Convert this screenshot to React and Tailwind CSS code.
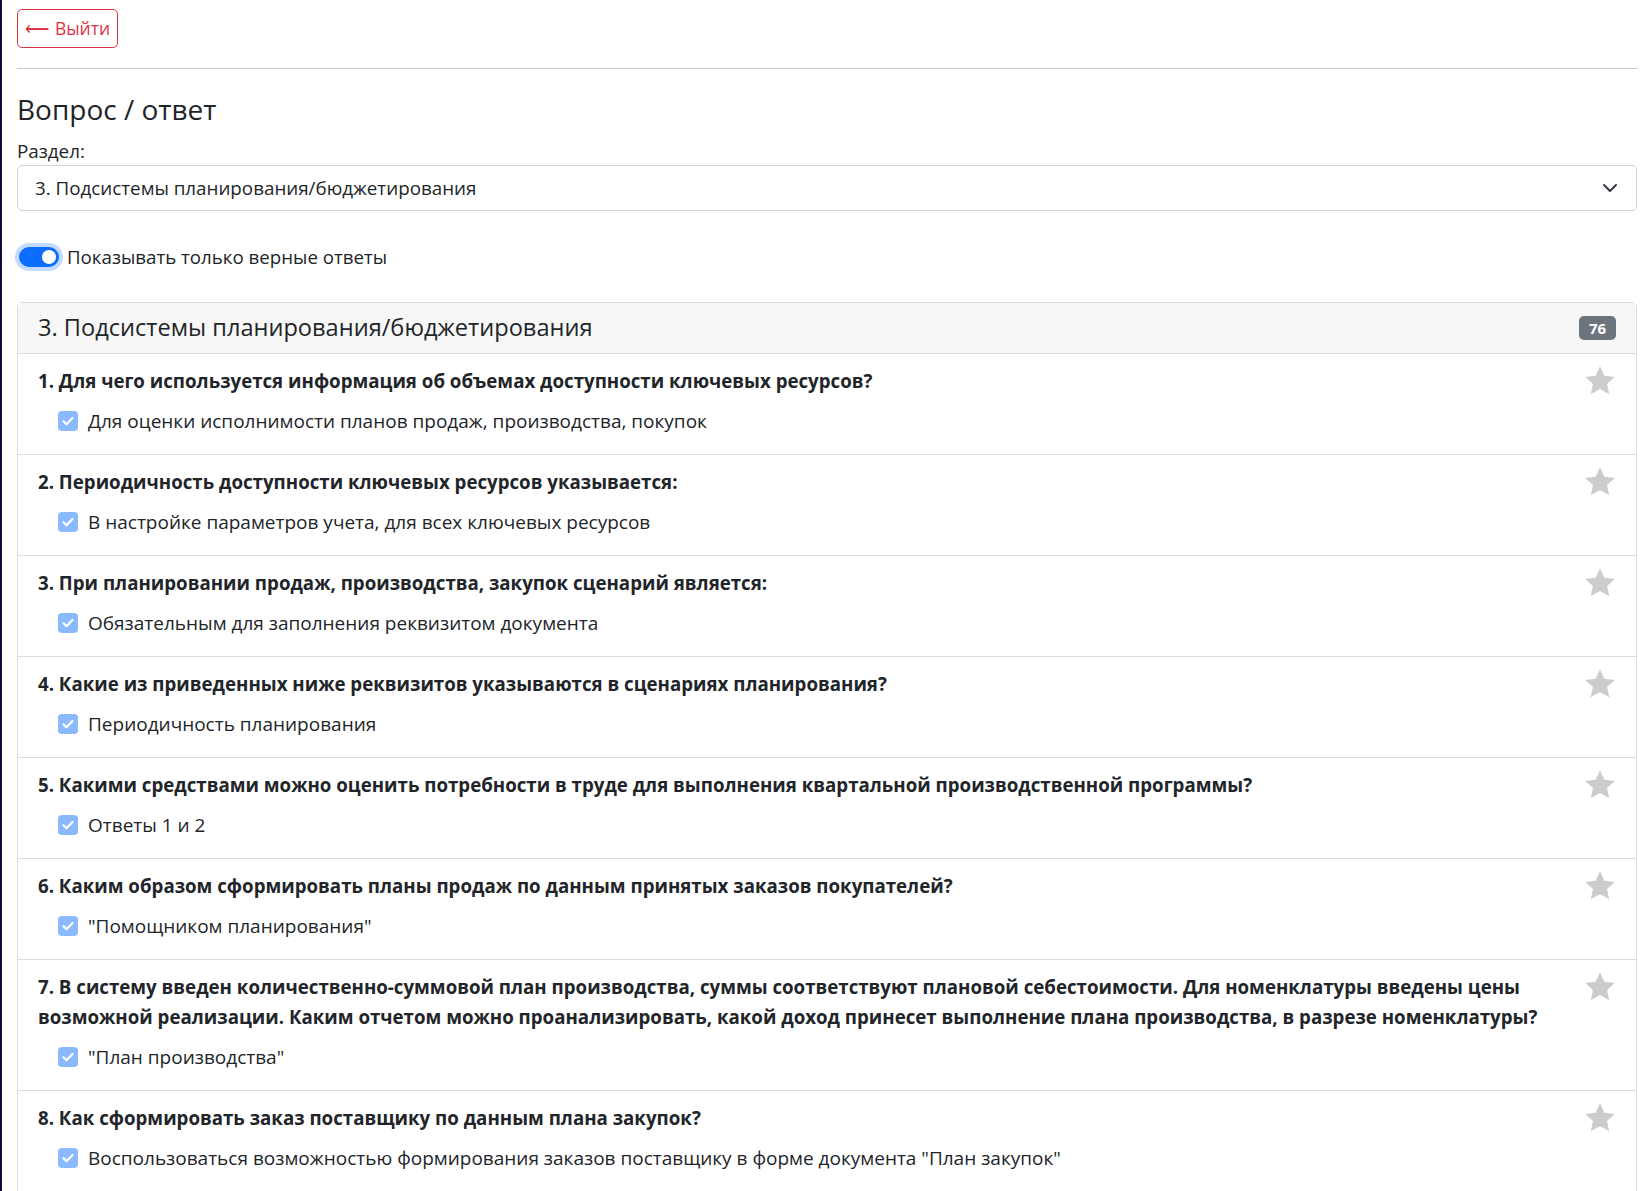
import React from 'react';

const questions = [
  { q: '1. Для чего используется информация об объемах доступности ключевых ресурсов?', a: 'Для оценки исполнимости планов продаж, производства, покупок' },
  { q: '2. Периодичность доступности ключевых ресурсов указывается:', a: 'В настройке параметров учета, для всех ключевых ресурсов' },
  { q: '3. При планировании продаж, производства, закупок сценарий является:', a: 'Обязательным для заполнения реквизитом документа' },
  { q: '4. Какие из приведенных ниже реквизитов указываются в сценариях планирования?', a: 'Периодичность планирования' },
  { q: '5. Какими средствами можно оценить потребности в труде для выполнения квартальной производственной программы?', a: 'Ответы 1 и 2' },
  { q: '6. Каким образом сформировать планы продаж по данным принятых заказов покупателей?', a: '"Помощником планирования"' },
  { q: '7. В систему введен количественно-суммовой план производства, суммы соответствуют плановой себестоимости. Для номенклатуры введены цены возможной реализации. Каким отчетом можно проанализировать, какой доход принесет выполнение плана производства, в разрезе номенклатуры?', a: '"План производства"' },
  { q: '8. Как сформировать заказ поставщику по данным плана закупок?', a: 'Воспользоваться возможностью формирования заказов поставщику в форме документа "План закупок"' },
];

const Star = () => (
  <svg width="32" height="31" viewBox="0 0 24 23" className="shrink-0">
    <path d="M12 0.8l3.3 7.1 7.8 0.9-5.8 5.3 1.6 7.7L12 17.9l-6.9 3.9 1.6-7.7L0.9 8.8l7.8-0.9z" fill="#cccccc" />
  </svg>
);

const Check = () => (
  <span className="w-5 h-5 shrink-0 rounded-[4px] bg-[#8bb9fe] flex items-center justify-center">
    <svg width="12" height="10" viewBox="0 0 12 10">
      <path d="M1.5 5.2l3 3L10.5 2" stroke="white" strokeWidth="2.2" fill="none" strokeLinecap="round" strokeLinejoin="round" />
    </svg>
  </span>
);

export default function App() {
  return (
    <div className="min-h-screen bg-white border-l-2 border-[#0b0b3b] pl-[15px] pr-[10px] text-[#212529]" style={{ fontFamily: '"Open Sans", "Noto Sans", sans-serif' }}>
      <div className="pt-[9px]">
        <button className="h-[39px] w-[101px] flex items-center justify-center gap-[6px] border border-[#dc3545] rounded-[5px] text-[#dc3545] text-[17.5px]">
          <span className="text-[17px]">⟵</span>
          <span>Выйти</span>
        </button>
      </div>
      <div className="mt-[20px] border-t border-[#c8c8c8]" />

      <h3 className="mt-[22px] text-[28px] leading-[36px]">Вопрос / ответ</h3>

      <div className="mt-[12px] text-[18.8px] leading-[24px]">Раздел:</div>
      <div className="mt-[2px] h-[46px] border border-[#ced4da] rounded-[5px] flex items-center justify-between pl-[17px] pr-[18px] text-[18.8px]">
        <span>3. Подсистемы планирования/бюджетирования</span>
        <svg width="16" height="16" viewBox="0 0 16 16">
          <path d="M2 5l6 6 6-6" stroke="#343a40" strokeWidth="2" fill="none" strokeLinecap="round" strokeLinejoin="round" />
        </svg>
      </div>

      <div className="mt-[34px] flex items-center gap-[8px]">
        <span className="w-10 h-5 rounded-full bg-[#0d6efd] ring-4 ring-[#c2dbfe] flex items-center justify-end pr-[3px] ml-[2px]">
          <span className="w-[14px] h-[14px] rounded-full bg-white" />
        </span>
        <span className="text-[18.7px] leading-[24px]">Показывать только верные ответы</span>
      </div>

      <div className="mt-[33px] border border-[#dcdcdc] rounded-t-[5px]">
        <div className="h-[51px] bg-[#f7f7f7] border-b border-[#dcdcdc] flex items-center justify-between pl-[20px] pr-[20px]">
          <span className="text-[23.6px]">3. Подсистемы планирования/бюджетирования</span>
          <span className="bg-[#6c757d] text-white text-[15px] font-bold rounded-[5px] w-[37px] h-[24px] flex items-center justify-center">76</span>
        </div>
        {questions.map((item, i) => (
          <div key={i} className={`flex justify-between gap-4 pl-[20px] pr-[20px] pt-3 pb-[21px] ${i > 0 ? 'border-t border-[#dcdcdc]' : ''}`}>
            <div>
              <div className="font-bold text-[18.7px] leading-[30px]">{item.q}</div>
              <div className="mt-[13px] pl-[20px] flex items-center gap-[10px] text-[19px] leading-[24px]">
                <Check />
                <span>{item.a}</span>
              </div>
            </div>
            <div className="-mt-[1px]">
              <Star />
            </div>
          </div>
        ))}
      </div>
    </div>
  );
}
